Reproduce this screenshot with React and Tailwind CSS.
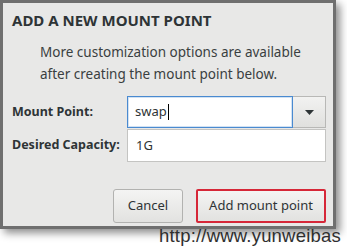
export default function App() {
  return (
    <div className="relative w-[347px] h-[247px] overflow-hidden bg-white" style={{ fontFamily: '"Noto Sans", "Open Sans", sans-serif' }}>
      <div className="w-[336px] h-[229px] border-[3px] border-[#6f6f6f] bg-[#e8e8e7] shadow-[4px_4px_8px_rgba(0,0,0,0.45)] text-[#2e3436]">
        <h1 className="pl-[9px] pt-[7px] text-[15px] font-bold leading-[20px]">ADD A NEW MOUNT POINT</h1>
        <p className="pl-[37px] pt-[11px] text-[13.5px] leading-[22px] text-[#3a3f41]">
          More customization options are available
          <br />
          after creating the mount point below.
        </p>

        <div className="mt-[11px] grid grid-cols-[115px_199px] gap-y-[1px] pl-[9px]">
          <div className="flex items-center text-[12.5px] font-bold">Mount Point:</div>
          <div className="flex h-[32px]">
            <div className="flex flex-1 items-center border border-[#4a8ad0] bg-white pl-[7px] text-[13px] shadow-[inset_0_0_0_1px_rgba(74,138,208,0.25)]">
              swap<span className="ml-[1px] inline-block h-[16px] w-px bg-black" />
            </div>
            <div className="flex w-[33px] items-center justify-center border border-l-0 border-[#b8b8b6] bg-gradient-to-b from-[#f2f2f1] to-[#e0e0de]">
              <svg width="9" height="5" viewBox="0 0 9 5"><path d="M0 0h9L4.5 5z" fill="#2e3436" /></svg>
            </div>
          </div>
          <div className="flex items-center text-[12.5px] font-bold">Desired Capacity:</div>
          <div className="flex h-[33px] items-center border border-[#c4c4c2] bg-white pl-[8px] text-[13px]">1G</div>
        </div>

        <div className="mt-[27px] flex justify-end gap-[13px] pr-[7px]">
          <button className="h-[34px] w-[70px] rounded-[3px] border border-[#b2b2b0] bg-gradient-to-b from-[#f4f4f3] to-[#e2e2e0] text-[13px] text-[#2e3436]">Cancel</button>
          <button className="h-[34px] w-[130px] rounded-[2px] border-2 border-[#d62738] bg-gradient-to-b from-[#f4f4f3] to-[#e2e2e0] text-[13px] text-[#2e3436]">Add mount point</button>
        </div>
      </div>
      <div className="absolute left-[159px] top-[226px] whitespace-nowrap text-[18.5px] leading-[20px] tracking-[0.2px] text-[#2f2f2f]" style={{ fontFamily: '"Liberation Sans", Arial, sans-serif' }}>
        http://www.yunweibas
      </div>
    </div>
  )
}
